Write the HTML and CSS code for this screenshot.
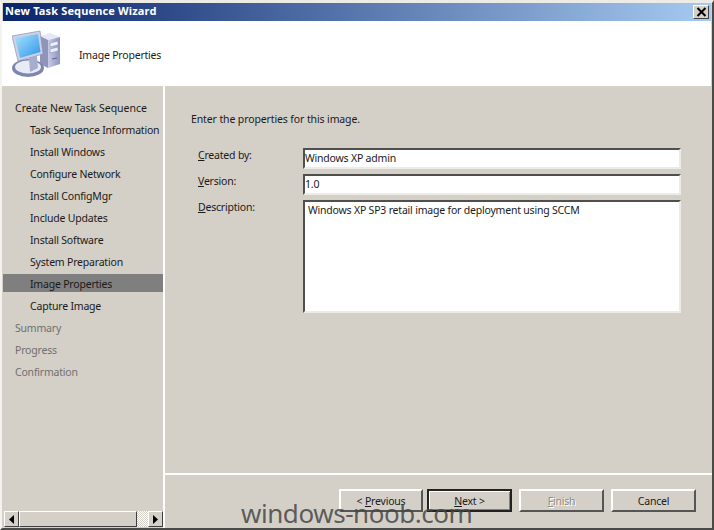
FILE: index.html
```html
<!DOCTYPE html>
<html lang="en">
<head>
<meta charset="utf-8">
<title>New Task Sequence Wizard</title>
<link rel="stylesheet" href="styles.css">
</head>
<body>
<div class="window">
  <div class="titlebar">
    <span class="title">New Task Sequence Wizard</span>
    <button class="close" aria-label="Close">
      <svg width="11" height="10" viewBox="0 0 11 10"><path d="M1.5 1 L9.5 9 M9.5 1 L1.5 9" stroke="#000" stroke-width="2" fill="none"/></svg>
    </button>
  </div>
  <header class="banner">
    <svg class="logo" width="52" height="50" viewBox="0 0 52 50">
      <defs>
        <linearGradient id="scr" x1="0" y1="0" x2="1" y2="1"><stop offset="0" stop-color="#a9e4fb"/><stop offset="1" stop-color="#2f94ea"/></linearGradient>
        <linearGradient id="front" x1="0" y1="0" x2="1" y2="0"><stop offset="0" stop-color="#c8cbe6"/><stop offset="1" stop-color="#8e93bf"/></linearGradient>
      </defs>
      <path d="M28 6 L38 3 L48 7 L36 10 Z" fill="#e6e8f4"/>
      <path d="M28 6 L36 10 V38 L28 34 Z" fill="#8f94bb"/>
      <path d="M36 10 L48 7 V34 L36 38 Z" fill="url(#front)"/>
      <path d="M38 13 L46 11 V15 L38 17 Z M38 19 L46 17 V21 L38 23 Z" fill="#eceef8" stroke="#7d82ab" stroke-width=".5"/>
      <path d="M40 29 L45 28" stroke="#5f648f" stroke-width="1"/>
      <ellipse cx="16" cy="38" rx="16" ry="9" fill="#7f86ad"/>
      <ellipse cx="16" cy="37" rx="13" ry="6.5" fill="#e8ebf5"/>
      <path d="M17 28 L25 26 L26 38 L18 42 Z" fill="#a6acd0"/>
      <path d="M0 6 L28 1 L31 24 L6 31 Z" fill="#cdd1e6" stroke="#8b90b4" stroke-width=".7"/>
      <path d="M3 8 L26 4 L28.5 22 L8 28 Z" fill="url(#scr)"/>
    </svg>
    <span class="banner-text">Image Properties</span>
  </header>
  <div class="main">
    <nav class="sidebar">
      <ul class="steps">
        <li class="step wide">Create New Task Sequence</li>
        <li class="step sub">Task Sequence Information</li>
        <li class="step sub">Install Windows</li>
        <li class="step sub">Configure Network</li>
        <li class="step sub">Install ConfigMgr</li>
        <li class="step sub">Include Updates</li>
        <li class="step sub">Install Software</li>
        <li class="step sub">System Preparation</li>
        <li class="step sub current">Image Properties</li>
        <li class="step sub">Capture Image</li>
        <li class="step later">Summary</li>
        <li class="step later">Progress</li>
        <li class="step later">Confirmation</li>
      </ul>
      <div class="hscroll">
        <span class="sb-btn"><svg width="5" height="9" viewBox="0 0 5 9"><path d="M5 0 V9 L0 4.5 Z" fill="#000"/></svg></span>
        <span class="sb-thumb"></span>
        <span class="sb-track"></span>
        <span class="sb-btn"><svg width="5" height="9" viewBox="0 0 5 9"><path d="M0 0 V9 L5 4.5 Z" fill="#000"/></svg></span>
      </div>
    </nav>
    <section class="content">
      <div class="pane">
        <p class="intro">Enter the properties for this image.</p>
        <div class="form">
          <label class="lbl"><u>C</u>reated by:</label>
          <div class="field">Windows XP admin</div>
          <label class="lbl"><u>V</u>ersion:</label>
          <div class="field">1.0</div>
          <label class="lbl"><u>D</u>escription:</label>
          <div class="field area">Windows XP SP3 retail image for deployment using SCCM</div>
        </div>
      </div>
      <footer class="actions">
        <button class="btn prev">&lt; <u>P</u>revious</button>
        <button class="btn default"><u>N</u>ext &gt;</button>
        <button class="btn disabled"><u>F</u>inish</button>
        <button class="btn">Cancel</button>
      </footer>
    </section>
  </div>
</div>
<div class="watermark">windows-noob.com</div>
</body>
</html>
```

FILE: styles.css
```css
* { box-sizing: border-box; }
html, body { margin: 0; padding: 0; }
body {
  width: 714px;
  height: 530px;
  overflow: hidden;
  position: relative;
  font-family: "Noto Sans", sans-serif;
  font-size: 10.5px;
  letter-spacing: -.2px;
  color: #1a1a1a;
  background: #d4d0c8;
}
.window {
  width: 714px;
  height: 530px;
  display: flex;
  flex-direction: column;
  background: #d4d0c8;
  border-top: 3px solid #ecebe6;
  border-left: 2px solid #f4f3ef;
  border-right: 2px solid #4a4a48;
  border-bottom: 2px solid #4a4a48;
}
.titlebar {
  height: 18px;
  flex: none;
  margin: 0 1px 0 1px;
  padding: 0 2px 0 2px;
  display: flex;
  align-items: center;
  justify-content: space-between;
  background: linear-gradient(90deg, #0a246a, #a6caf0);
}
.title {
  color: #fff;
  font-weight: 700;
  font-size: 11px;
  line-height: 16px;
  margin-bottom: 2px;
  letter-spacing: .15px;
}
.close {
  width: 16px;
  height: 14px;
  padding: 0;
  display: flex;
  align-items: center;
  justify-content: center;
  background: #d4d0c8;
  border: 1px solid;
  border-color: #fff #404040 #404040 #fff;
}
.banner {
  height: 65px;
  flex: none;
  display: flex;
  align-items: center;
  background: #fff;
  padding-left: 10px;
  margin-right: 1px;
}
.logo { flex: none; margin-top: 2px; }
.banner-text { margin-left: 15px; margin-top: 3px; }
.main { flex: 1; display: flex; min-height: 0; }
.sidebar {
  width: 163px;
  flex: none;
  display: flex;
  flex-direction: column;
  border-right: 2px solid #fff;
  padding-left: 1px;
}
.steps { list-style: none; margin: 11px 0 0; padding: 0; flex: 1; }
.step { height: 22px; line-height: 22px; padding-left: 12px; white-space: nowrap; overflow: hidden; }
.wide { letter-spacing: 0; }
.sub { padding-left: 27px; }
.current { background: linear-gradient(#7f7f7f, #7f7f7f) 0 1px / 100% 18px no-repeat; }
.later { color: #6f6f6f; }
.hscroll { height: 16px; flex: none; display: flex; margin: 0 0 1px 1px; }
.sb-btn {
  width: 15px;
  flex: none;
  display: flex;
  align-items: center;
  justify-content: center;
  background: #d4d0c8;
  border: 1px solid;
  border-color: #fff #404040 #404040 #fff;
}
.sb-thumb {
  width: 118px;
  flex: none;
  background: #d4d0c8;
  border: 1px solid;
  border-color: #fff #404040 #404040 #fff;
}
.sb-track {
  flex: 1;
  background: repeating-conic-gradient(#fff 0 25%, #d4d0c8 0 50%) 0 0 / 2px 2px;
}
.content { flex: 1; display: flex; flex-direction: column; min-width: 0; }
.pane { flex: 1; padding: 25px 28px 0 26px; border-bottom: 2px solid #fff; min-height: 0; }
.intro { margin: 0 0 21px; line-height: 16px; letter-spacing: -.12px; }
.form {
  display: grid;
  grid-template-columns: 112px 378px;
  grid-template-rows: 21px 21px 113px;
  row-gap: 5px;
}
.lbl { padding: 0 0 0 7px; line-height: 16px; margin-top: -1px; }
.field {
  background: #fff;
  border: 2px solid;
  border-color: #4f4f4d #ecebe6 #ecebe6 #4f4f4d;
  padding: 0;
  line-height: 17px;
  white-space: nowrap;
}
.area { padding: 0 0 0 3px; line-height: 17px; }
.actions {
  height: 53px;
  flex: none;
  display: flex;
  align-items: flex-start;
  gap: 7px;
  padding: 14px 0 0 174px;
}
.btn {
  width: 85px;
  height: 23px;
  padding: 0;
  font: inherit;
  letter-spacing: inherit;
  color: #1a1a1a;
  background: #d4d0c8;
  border: 2px solid;
  border-color: #fff #555 #555 #fff;
}
.prev { margin-right: -3px; width: 84px; }
.default { border-color: #222; box-shadow: inset 1px 1px 0 #fff, inset -1px -1px 0 #808080; }
.disabled { color: #8d8d8a; text-shadow: 1px 1px 0 #fff; }
.watermark {
  position: absolute;
  left: 241px;
  top: 495px;
  font-size: 26px;
  line-height: 36px;
  letter-spacing: -.45px;
  color: rgba(70, 70, 70, .85);
  white-space: nowrap;
}
```
